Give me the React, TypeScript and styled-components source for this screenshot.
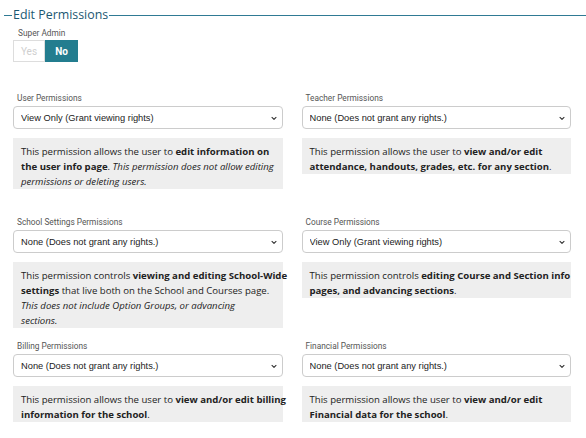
import React from "react";
import styled, { createGlobalStyle } from "styled-components";

const GlobalStyle = createGlobalStyle`
  html, body { margin: 0; padding: 0; background: #ffffff; }
  * { box-sizing: border-box; }
`;

const Page = styled.div`
  width: 586px;
  height: 438px;
  overflow: hidden;
  background: #fff;
  font-family: "Open Sans", sans-serif;
`;

const Legend = styled.div`
  display: flex;
  align-items: center;
  height: 20px;
  margin: 5px 0 0 4px;
`;

const Rule = styled.div<{ $grow?: boolean }>`
  height: 1px;
  background: #2f7a94;
  width: ${(p) => (p.$grow ? "auto" : "8px")};
  flex: ${(p) => (p.$grow ? "1" : "none")};
`;

const LegendText = styled.span`
  font-family: "Open Sans", sans-serif;
  font-size: 12.4px;
  line-height: 20px;
  color: #1b5872;
  padding: 0 1px;
`;

const Body = styled.div`
  padding: 0 15px 0 13px;
`;

const SuperField = styled.div`
  margin-top: 2px;
`;

const FieldLabel = styled.div<{ $indent?: number }>`
  font-family: Roboto, "Liberation Sans", sans-serif;
  font-size: 8.3px;
  line-height: 12px;
  color: #555;
  padding-left: ${(p) => p.$indent ?? 4}px;
`;

const Toggle = styled.div`
  display: flex;
  width: fit-content;
  margin-top: 1px;
  height: 22px;
`;

const ToggleOption = styled.div<{ $active?: boolean }>`
  width: ${(p) => (p.$active ? "33px" : "32px")};
  height: 22px;
  display: flex;
  align-items: center;
  justify-content: center;
  font-family: Roboto, "Liberation Sans", sans-serif;
  font-size: 10px;
  font-weight: ${(p) => (p.$active ? 700 : 400)};
  color: ${(p) => (p.$active ? "#ffffff" : "#cfcfcf")};
  background: ${(p) => (p.$active ? "#237d8f" : "#ffffff")};
  border: 1px solid ${(p) => (p.$active ? "#237d8f" : "#dddddd")};
`;

const Grid = styled.div`
  margin-top: 30px;
  display: grid;
  grid-template-columns: 1fr 1fr;
  column-gap: 19px;
  grid-auto-rows: 124px;
`;

const Cell = styled.div`
  display: flex;
  flex-direction: column;
  min-width: 0;
`;

const SelectWrap = styled.div`
  position: relative;
  margin-top: 2px;
`;

const Select = styled.select`
  appearance: none;
  -webkit-appearance: none;
  display: block;
  width: 100%;
  height: 23px;
  border: 1px solid #cccccc;
  border-radius: 4px;
  background: #fff;
  padding: 0 20px 0 7px;
  font-family: "Liberation Sans", Arial, sans-serif;
  font-size: 9.3px;
  color: #222;
  outline: none;
`;

const Chevron = styled.svg`
  position: absolute;
  right: 6px;
  top: 50%;
  transform: translateY(-40%);
  pointer-events: none;
`;

const Info = styled.div`
  margin-top: 9px;
  background: #eeeeee;
  padding: 6px 1px 0 8px;
  font-family: "Open Sans", sans-serif;
  font-size: 9.6px;
  line-height: 15px;
  color: #222;

  b { font-weight: 700; }
  i { font-style: italic; }
`;

const InfoLine = styled.span`
  display: block;
  white-space: nowrap;
`;

type Perm = {
  label: string;
  value: string;
  lines: React.ReactNode[];
};

const OPTIONS = ["None (Does not grant any rights.)", "View Only (Grant viewing rights)"];

const perms: Perm[] = [
  {
    label: "User Permissions",
    value: OPTIONS[1],
    lines: [
      <>This permission allows the user to <b>edit information on</b></>,
      <><b>the user info page</b>. <i>This permission does not allow editing</i></>,
      <><i>permissions or deleting users.</i></>,
    ],
  },
  {
    label: "Teacher Permissions",
    value: OPTIONS[0],
    lines: [
      <>This permission allows the user to <b>view and/or edit</b></>,
      <><b>attendance, handouts, grades, etc. for any section</b>.</>,
    ],
  },
  {
    label: "School Settings Permissions",
    value: OPTIONS[0],
    lines: [
      <>This permission controls <b>viewing and editing School-Wide</b></>,
      <><b>settings</b> that live both on the School and Courses page.</>,
      <><i>This does not include Option Groups, or advancing</i></>,
      <><i>sections.</i></>,
    ],
  },
  {
    label: "Course Permissions",
    value: OPTIONS[1],
    lines: [
      <>This permission controls <b>editing Course and Section info</b></>,
      <><b>pages, and advancing sections</b>.</>,
    ],
  },
  {
    label: "Billing Permissions",
    value: OPTIONS[0],
    lines: [
      <>This permission allows the user to <b>view and/or edit billing</b></>,
      <><b>information for the school</b>.</>,
    ],
  },
  {
    label: "Financial Permissions",
    value: OPTIONS[0],
    lines: [
      <>This permission allows the user to <b>view and/or edit</b></>,
      <><b>Financial data for the school</b>.</>,
    ],
  },
];

const PermissionField: React.FC<{ perm: Perm }> = ({ perm }) => (
  <Cell>
    <FieldLabel>{perm.label}</FieldLabel>
    <SelectWrap>
      <Select defaultValue={perm.value}>
        {OPTIONS.map((o) => (
          <option key={o} value={o}>
            {o}
          </option>
        ))}
      </Select>
      <Chevron width="6" height="4" viewBox="0 0 6 4">
        <path d="M1 1 L3 3 L5 1" fill="none" stroke="#333" strokeWidth="1.1" strokeLinecap="round" strokeLinejoin="round" />
      </Chevron>
    </SelectWrap>
    <Info>
      {perm.lines.map((l, i) => (
        <InfoLine key={i}>{l}</InfoLine>
      ))}
    </Info>
  </Cell>
);

export default function App() {
  return (
    <>
      <GlobalStyle />
      <Page>
        <Legend>
          <Rule />
          <LegendText>Edit Permissions</LegendText>
          <Rule $grow />
        </Legend>
        <Body>
          <SuperField>
            <FieldLabel $indent={5}>Super Admin</FieldLabel>
            <Toggle>
              <ToggleOption>Yes</ToggleOption>
              <ToggleOption $active>No</ToggleOption>
            </Toggle>
          </SuperField>
          <Grid>
            {perms.map((p) => (
              <PermissionField key={p.label} perm={p} />
            ))}
          </Grid>
        </Body>
      </Page>
    </>
  );
}
